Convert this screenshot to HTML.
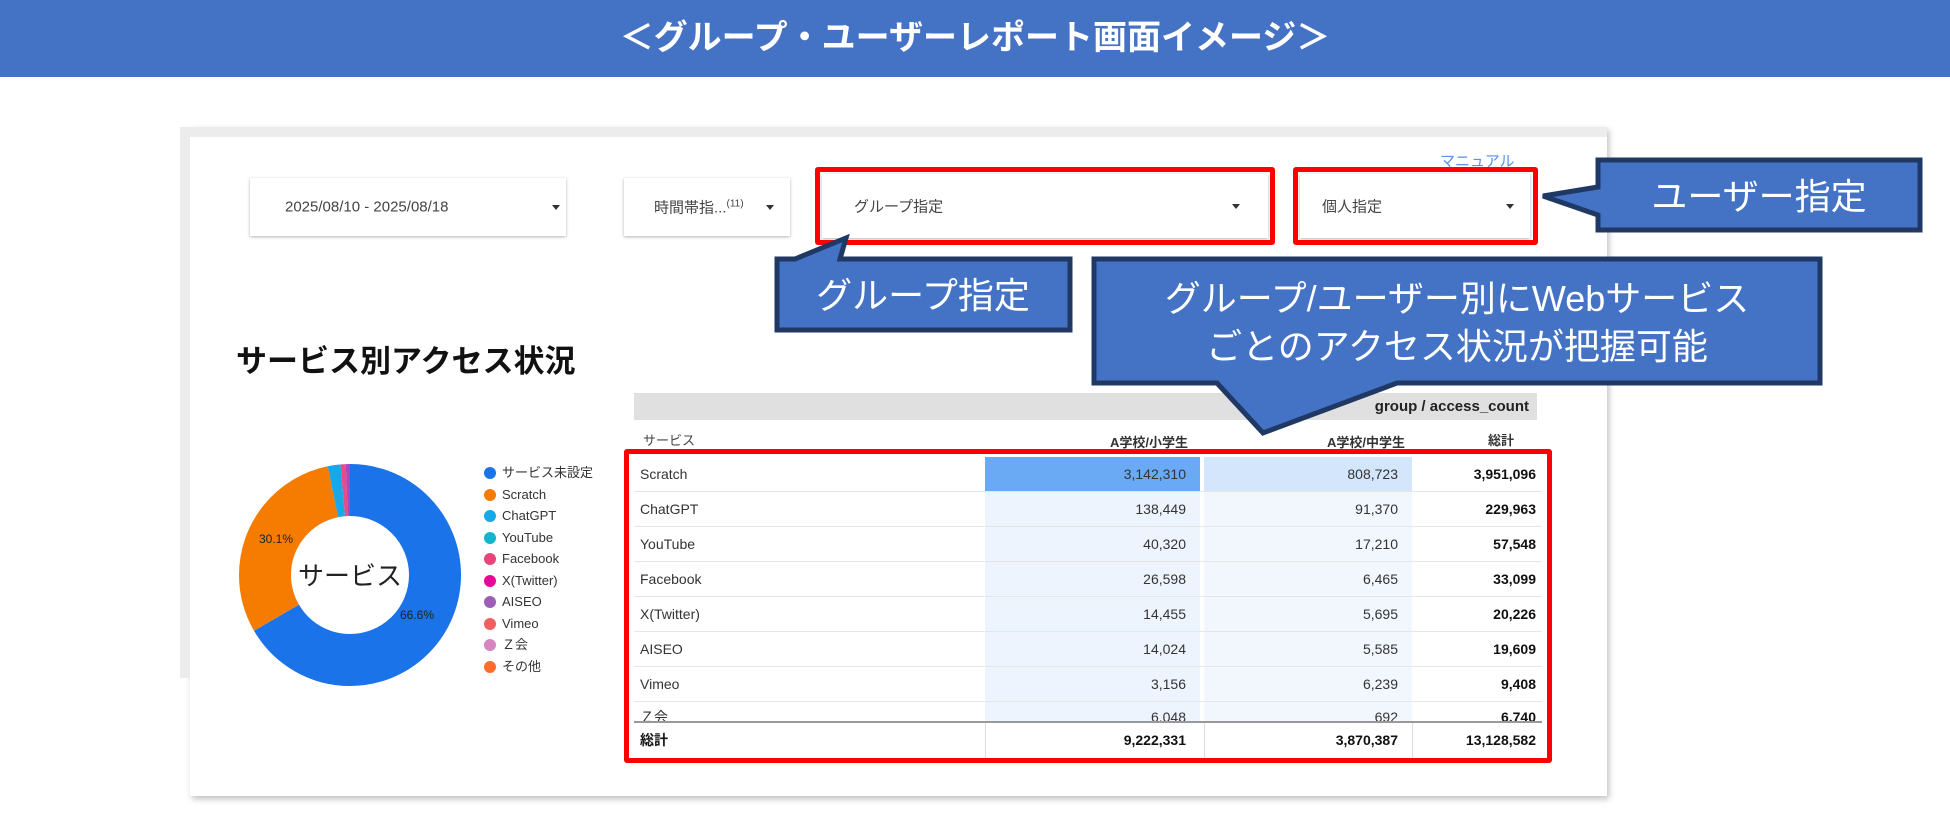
<!DOCTYPE html>
<html><head><meta charset="utf-8"><style>
*{margin:0;padding:0;box-sizing:border-box}
body{width:1950px;height:813px;background:#fff;position:relative;overflow:hidden;font-family:"Liberation Sans","Noto Sans CJK JP",sans-serif}
.a{position:absolute}
.hdr{left:0;top:0;width:1950px;height:77px;background:#4472c4;color:#fff;font-size:34px;font-weight:bold;text-align:center;line-height:77px}
.frame{left:190px;top:127px;width:1417px;height:669px;background:#fff;box-shadow:2px 3px 6px rgba(0,0,0,.25)}
.dd{background:#fff;box-shadow:0 1px 3px rgba(0,0,0,.3);font-size:15px;color:#444;}
.dd span{position:absolute;top:50%;transform:translateY(-50%)}
.tri{position:absolute;width:0;height:0;border-left:4px solid transparent;border-right:4px solid transparent;border-top:5px solid #333;top:50%;margin-top:-2px}
.red{border:5px solid #f00;border-radius:3px}
.row{position:absolute;left:634px;width:908px;height:35px;border-bottom:1px solid #e6e6e6;font-size:14px;color:#333}
.row div{position:absolute;top:0;height:34px;line-height:34px}
.c1{left:6px}
.c2{left:351px;width:215px;text-align:right;padding-right:14px}
.c3{left:570px;width:208px;text-align:right;padding-right:14px}
.c4{left:778px;width:124px;text-align:right;font-weight:bold;color:#111}
.lg{position:absolute;left:484px;font-size:13px;color:#333;height:20px;line-height:20px}
.lg i{display:inline-block;width:12px;height:12px;border-radius:50%;vertical-align:-2px;margin-right:6px}
</style></head><body>
<div class="a hdr">＜グループ・ユーザーレポート画面イメージ＞</div>
<div class="a frame"></div>
<div class="a" style="left:180px;top:127px;width:10px;height:551px;background:#ececec"></div>
<div class="a" style="left:180px;top:127px;width:1427px;height:10px;background:#ececec"></div>

<div class="a" style="left:1440px;top:150px;font-size:15px;color:#5b8ee6">マニュアル</div>

<div class="a dd" style="left:250px;top:178px;width:316px;height:58px"><span style="left:35px">2025/08/10 - 2025/08/18</span><i class="tri" style="left:302px"></i></div>
<div class="a dd" style="left:624px;top:178px;width:166px;height:58px"><span style="left:30px">時間帯指...<sup style="font-size:10px">(11)</sup></span><i class="tri" style="left:142px"></i></div>
<div class="a dd" style="left:822px;top:174px;width:446px;height:64px"><span style="left:32px">グループ指定</span><i class="tri" style="left:410px"></i></div>
<div class="a red" style="left:815px;top:167px;width:460px;height:78px"></div>
<div class="a dd" style="left:1300px;top:174px;width:230px;height:64px"><span style="left:22px">個人指定</span><i class="tri" style="left:206px"></i></div>
<div class="a red" style="left:1293px;top:167px;width:245px;height:78px"></div>

<div class="a" style="left:236px;top:336px;font-size:31px;font-weight:bold;color:#111">サービス別アクセス状況</div>

<svg class="a" style="left:230px;top:455px" width="240" height="240" viewBox="-120 -120 240 240">
<g transform="rotate(-90)">
<circle r="85" fill="none" stroke="#1a73e8" stroke-width="52" stroke-dasharray="355.7 534.1"/>
<circle r="85" fill="none" stroke="#f57c00" stroke-width="52" stroke-dasharray="0 355.7 160.9 534.1"/>
<circle r="85" fill="none" stroke="#17a8e8" stroke-width="52" stroke-dasharray="0 516.6 10 534.1"/>
<circle r="85" fill="none" stroke="#e84b8a" stroke-width="52" stroke-dasharray="0 526.6 4 534.1"/>
<circle r="85" fill="none" stroke="#ab47bc" stroke-width="52" stroke-dasharray="0 530.6 3.5 534.1"/>
</g>
<text x="-91" y="-32" font-size="12" fill="#222" font-family="Liberation Sans">30.1%</text>
<text x="50" y="44" font-size="12" fill="#222" font-family="Liberation Sans">66.6%</text>
<text x="0" y="10" font-size="26" text-anchor="middle" fill="#222" font-family="Liberation Sans,Noto Sans CJK JP,sans-serif">サービス</text>
</svg>

<div class="lg" style="top:463px"><i style="background:#1a73e8"></i>サービス未設定</div>
<div class="lg" style="top:485px"><i style="background:#f57c00"></i>Scratch</div>
<div class="lg" style="top:506px"><i style="background:#17a8e8"></i>ChatGPT</div>
<div class="lg" style="top:528px"><i style="background:#12b5cb"></i>YouTube</div>
<div class="lg" style="top:549px"><i style="background:#e8457c"></i>Facebook</div>
<div class="lg" style="top:571px"><i style="background:#e5099a"></i>X(Twitter)</div>
<div class="lg" style="top:592px"><i style="background:#9c5fb5"></i>AISEO</div>
<div class="lg" style="top:614px"><i style="background:#f05f5f"></i>Vimeo</div>
<div class="lg" style="top:635px"><i style="background:#d685c0"></i>Ｚ会</div>
<div class="lg" style="top:657px"><i style="background:#ff6d2d"></i>その他</div>

<div class="a" style="left:634px;top:393px;width:903px;height:27px;background:#e0e0e0;font-size:15px;font-weight:bold;text-align:right;padding-right:8px;line-height:27px;color:#222">group / access_count</div>
<div class="a" style="left:643px;top:430px;font-size:13px;color:#444">サービス</div>
<div class="a" style="left:1060px;top:432px;width:128px;text-align:right;font-size:13px;font-weight:bold;color:#333">A学校/小学生</div>
<div class="a" style="left:1280px;top:432px;width:125px;text-align:right;font-size:13px;font-weight:bold;color:#333">A学校/中学生</div>
<div class="a" style="left:1450px;top:430px;width:64px;text-align:right;font-size:13px;font-weight:bold;color:#333">総計</div>

<div class="a" style="left:985px;top:457px;width:215px;height:264px;background:#eef4fd"></div>
<div class="a" style="left:1204px;top:457px;width:208px;height:264px;background:#f2f7fe"></div>
<div class="a" style="left:985px;top:457px;width:215px;height:35px;background:#6aaaf5"></div>
<div class="a" style="left:1204px;top:457px;width:208px;height:35px;background:#d4e6fb"></div>

<div class="row" style="top:457px"><div class="c1">Scratch</div><div class="c2">3,142,310</div><div class="c3">808,723</div><div class="c4">3,951,096</div></div>
<div class="row" style="top:492px"><div class="c1">ChatGPT</div><div class="c2">138,449</div><div class="c3">91,370</div><div class="c4">229,963</div></div>
<div class="row" style="top:527px"><div class="c1">YouTube</div><div class="c2">40,320</div><div class="c3">17,210</div><div class="c4">57,548</div></div>
<div class="row" style="top:562px"><div class="c1">Facebook</div><div class="c2">26,598</div><div class="c3">6,465</div><div class="c4">33,099</div></div>
<div class="row" style="top:597px"><div class="c1">X(Twitter)</div><div class="c2">14,455</div><div class="c3">5,695</div><div class="c4">20,226</div></div>
<div class="row" style="top:632px"><div class="c1">AISEO</div><div class="c2">14,024</div><div class="c3">5,585</div><div class="c4">19,609</div></div>
<div class="row" style="top:667px"><div class="c1">Vimeo</div><div class="c2">3,156</div><div class="c3">6,239</div><div class="c4">9,408</div></div>
<div class="row" style="top:702px;height:19px;overflow:hidden;border:none"><div class="c1" style="top:-2px">Ｚ会</div><div class="c2" style="top:-2px">6,048</div><div class="c3" style="top:-2px">692</div><div class="c4" style="top:-2px">6,740</div></div>
<div class="a" style="left:634px;top:721px;width:908px;height:2px;background:#999"></div>
<div class="row" style="top:723px;height:36px;border:none;font-weight:bold;color:#111"><div class="c1">総計</div><div class="c2">9,222,331</div><div class="c3">3,870,387</div><div class="c4">13,128,582</div></div>
<div class="a" style="left:985px;top:723px;width:1px;height:36px;background:#ddd"></div>
<div class="a" style="left:1204px;top:723px;width:1px;height:36px;background:#ddd"></div>
<div class="a" style="left:1412px;top:723px;width:1px;height:36px;background:#ddd"></div>
<div class="a red" style="left:624px;top:449px;width:928px;height:314px"></div>

<svg class="a" style="left:0;top:0" width="1950" height="813">
<g fill="#4472c4" stroke="#1f3864" stroke-width="5" stroke-linejoin="miter">
<polygon points="1598,160 1920,160 1920,230 1598,230 1598,215 1543,196 1598,187"/>
<polygon points="777,259 795,259 846,238 840,259 1070,259 1070,330 777,330"/>
<polygon points="1094,259 1820,259 1820,383 1397,383 1263,433 1217,383 1094,383"/>
</g>
<g fill="#fff" font-family="Liberation Sans,Noto Sans CJK JP,sans-serif" font-size="36" text-anchor="middle">
<text x="1759" y="209">ユーザー指定</text>
<text x="923" y="308">グループ指定</text>
<text x="1457" y="311">グループ/ユーザー別にWebサービス</text>
<text x="1457" y="359">ごとのアクセス状況が把握可能</text>
</g>
</svg>
</body></html>
